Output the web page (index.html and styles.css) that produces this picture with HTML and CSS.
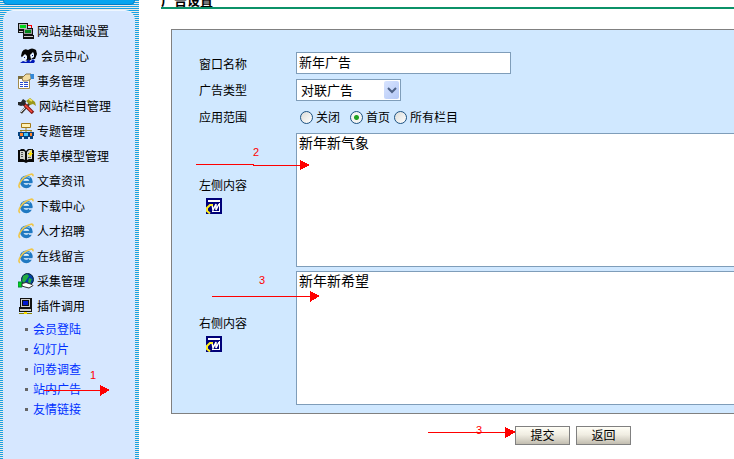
FILE: index.html
```html
<!DOCTYPE html>
<html lang="zh-CN">
<head>
<meta charset="utf-8">
<title>广告设置</title>
<link rel="stylesheet" href="styles.css">
</head>
<body>
<svg class="defs" aria-hidden="true">
  <symbol id="ie" viewBox="0 0 16 16">
    <circle cx="8.300" cy="8.800" r="4.700" fill="#e4f4ff" stroke="#2079c2" stroke-width="3.400"/>
    <path d="M4 7.800h10v2.400H4z" fill="#2079c2"/>
    <path d="M11 10.200h5v1.600h-5z" fill="#d6e7ff"/>
    <path d="M4 5.500q4-3.500 8-.5" fill="none" stroke="#7cc5f0" stroke-width="1.200"/>
    <path d="M2 15C-1.500 12 5 3 13 1.200q2.500-.4 1.800 2" fill="none" stroke="#efc64a" stroke-width="1.600"/>
  </symbol>
  <symbol id="editor" viewBox="0 0 16 16">
    <path d="M0 0h16v16H0z" fill="#000078"/>
    <path d="M2 2h12v2H2zM13 5h1v9H6v-1h7z" fill="#fff"/>
    <path d="M6 6l1 6 3-6v6l3-6" fill="none" stroke="#fff" stroke-width="1.500"/>
    <path d="M7 7H4L1 10v3l3 2.500" fill="none" stroke="#ffef20" stroke-width="2"/>
  </symbol>
</svg>

<div class="page">
  <aside class="sidebar">
    <div class="tab"></div>
    <nav class="menu">
      <ul class="modules">
        <li><a href="#"><svg viewBox="0 0 16 16" shape-rendering="crispEdges"><path d="M0 0h10v7H0zM0 7h6v3H0zM5 5h10v7H5zM5 12h11v4H5z" fill="#111"/><path d="M1 1h8v5H1z" fill="#bbb"/><path d="M2 2h6v3H2z" fill="#00d51c"/><path d="M6 6h8v5H6z" fill="#999"/><path d="M7 7h6v3H7z" fill="#008a18"/><path d="M1 8h4v1H1zM6 13h9v1H6z" fill="#ccc"/><path d="M10 2h3v3" fill="none" stroke="red"/></svg>网站基础设置</a></li>
        <li><a href="#"><svg class="wide" viewBox="0 0 18 16"><path d="M3 4Q5 0 9 2q4-3 8 0l1 4-2 5h-3l-3 2-5-1-3-4z" fill="#050505"/><path d="M3 9l3-3 2 2v3l-2 2-3-1zM11 7l3-3 1 2v3l-3 2z" fill="#e5f1ff"/><path d="M1 15l3-2 3 1 3-3 1 3 3-3 2 2-1 2z" fill="#0018b8"/><path d="M5 9h1v1H5zM13 7h1v1h-1z" fill="#001880"/></svg>会员中心</a></li>
        <li><a href="#"><svg viewBox="0 0 16 16"><path d="M.5 3.500h11v12H.5z" fill="#fff" stroke="#a28c4d"/><path d="M0 3h5v3H0z" fill="#7b6c3b"/><path d="M4 5l4-4h5v5l-4 2H5z" fill="#f1dba1" stroke="#8a7850"/><path d="M12 1h4v5h-3z" fill="#3488d8"/><path d="M2 9.500h3m1 0h4M2 11.500h3m1 0h4M2 13.500h3m1 0h4" stroke="#244bd0"/></svg>事务管理</a></li>
        <li><a href="#"><svg class="tools" viewBox="0 0 18 16"><path d="M3 15L12 5" stroke="#403c36" stroke-width="2.500"/><path d="M3 14L10 7" stroke="#ddd" stroke-width="1"/><path d="M6 6l9 9" stroke="#801818" stroke-width="3.500"/><path d="M7 7l7 7" stroke="#ff4f3d" stroke-width="1.500"/><path d="M0 4h3l2-3 3 2-1 4-4 1-3-1z" fill="#26282b"/><path d="M8 3l4-3 5 4 1 4-3-2-3 1z" fill="#9b991b"/><path d="M11 1l3 2" stroke="#eee25c" stroke-width="2"/></svg>网站栏目管理</a></li>
        <li><a href="#"><svg viewBox="0 0 16 16"><path d="M3.500.5h9v4h-9z" fill="#fff1b5" stroke="#a57b18"/><path d="M8 5v2M2 7.500h12M3 8v2M8 8v2M13 8v2" stroke="#9d8424" fill="none"/><path d="M0 9h16v4h-1v3h-3v-2h-2v2H6v-2H4v2H1v-3H0z" fill="#06427e"/><path d="M2 10h3v3H2zM12 10h2v3h-2z" fill="#ff852c"/><path d="M6 10h4v3H6z" fill="#49c7ff"/></svg>专题管理</a></li>
        <li><a href="#"><svg viewBox="0 0 16 16"><path d="M0 2h2l1-1h3l2 2 2-2h5v1h1v12h-6l-2 1-2-1H0z" fill="#080808"/><path d="M2 3h4l1 1v8l-2-1H2zM9 4l2-2h3v9h-3l-2 1z" fill="#d5d5cf"/><path d="M3 4.500h2M3 6.500h2M3 8.500h2M10 5.500h3M10 9.500h3" stroke="#555"/><path d="M14 1l-4 6h2l-1 3 4-5h-2z" fill="#ffe600"/></svg>表单模型管理</a></li>
        <li><a href="#"><svg><use href="#ie"/></svg>文章资讯</a></li>
        <li><a href="#"><svg><use href="#ie"/></svg>下载中心</a></li>
        <li><a href="#"><svg><use href="#ie"/></svg>人才招聘</a></li>
        <li><a href="#"><svg><use href="#ie"/></svg>在线留言</a></li>
        <li><a href="#"><svg viewBox="0 0 16 16"><circle cx="9.500" cy="6.500" r="6" fill="#003da5" stroke="#062335"/><path d="M5 3l4-2 2 2-2 3-3 4-2-2zM11 5l3 1-2 5-2-2z" fill="#22ad40"/><path d="M0 9h4v5H0z" fill="#00d51c" stroke="#083"/><path d="M4 10.500l4-1 6 2 1 1-4 2.500-4-1-3-1z" fill="#fff" stroke="#333"/></svg>采集管理</a></li>
        <li><a href="#"><svg viewBox="0 0 16 16" shape-rendering="crispEdges"><path d="M2 0h12v10H2zM1 9h13v5H1z" fill="#111"/><path d="M3 1h9v8H3zM2 11h11v2H2z" fill="#ccc"/><path d="M4 2h7v6H4z" fill="#111"/><path d="M5 3h5v4H5z" fill="#0018d0"/><path d="M1 15h13v1H1z" fill="#8c8500"/><path d="M6 14h3v2H6z" fill="#ffdf00"/></svg>插件调用</a></li>
      </ul>
      <ul class="plugins">
        <li><a href="#">会员登陆</a></li>
        <li><a href="#">幻灯片</a></li>
        <li><a href="#">问卷调查</a></li>
        <li><a href="#">站内广告</a></li>
        <li><a href="#">友情链接</a></li>
      </ul>
    </nav>
  </aside>

  <main class="content">
    <h1 class="title">广告设置</h1>
    <form>
      <div class="fields">
        <label for="name">窗口名称</label>
        <input class="text" id="name" type="text" value="新年广告">
        <label for="type">广告类型</label>
        <div class="picker">
          <select id="type"><option>对联广告</option></select>
          <svg class="drop" viewBox="0 0 15 18" aria-hidden="true"><path d="M4 7l4 4 4-4" fill="none" stroke="#4d6185" stroke-width="2"/></svg>
        </div>
        <span id="scope">应用范围</span>
        <div class="radios" role="radiogroup" aria-labelledby="scope">
          <label class="off"><input type="radio" name="scope">关闭</label>
          <label><input type="radio" name="scope" checked>首页</label>
          <label><input type="radio" name="scope">所有栏目</label>
        </div>
        <div class="side">
          <label for="left">左侧内容</label>
          <svg><use href="#editor"/></svg>
        </div>
        <textarea id="left">新年新气象</textarea>
        <div class="side">
          <label for="right">右侧内容</label>
          <svg><use href="#editor"/></svg>
        </div>
        <textarea id="right">新年新希望</textarea>
      </div>
      <div class="actions">
        <button type="submit">提交</button>
        <button type="button">返回</button>
      </div>
    </form>
  </main>

  <svg class="notes" width="734" height="459">
    <g class="arrows" shape-rendering="crispEdges">
      <path d="M44 390h57M196 164h57v1h48M212 296h99M428 432h78"/>
      <path class="heads" d="M100 385l10 5-10 6zM300 160l10 5-10 5zM310 291l10 5-10 6zM505 427l11 5-11 6z"/>
    </g>
    <text x="90" y="379">1</text>
    <text x="253" y="156">2</text>
    <text x="259" y="284">3</text>
    <text x="476" y="434">3</text>
  </svg>
</div>
</body>
</html>
```
FILE: styles.css
```css
* { box-sizing: border-box; }

body {
  margin: 0;
  background: #fff;
  color: #000;
  font: 12px/16px "Noto Sans CJK SC", sans-serif;
}

.defs { position: absolute; width: 0; height: 0; }

.page {
  position: relative;
  display: flex;
  height: 100vh;
  overflow: hidden;
}

.sidebar {
  display: flex;
  flex-direction: column;
  flex: 0 0 139px;
  padding: 0 4px 0 3px;
  background: repeating-linear-gradient(#18a2e4 0 1px, #eeeae6 1px 2px);
}

.tab {
  height: 5px;
  margin-bottom: 5px;
  background: #08a5ef;
  border: solid #087cc4;
  border-width: 0 1px 1px;
  border-radius: 0 0 6px 6px;
}

.menu {
  flex: 1;
  padding: 7px 0 0 15px;
  background: #d6e7ff;
  border-top: 1px solid #eef6ff;
  border-radius: 10px 10px 0 0;
}

ul { margin: 0; padding: 0; list-style: none; }
a { display: flex; align-items: center; text-decoration: none; color: inherit; }
.modules a { height: 25px; gap: 3px; }
.modules svg { width: 16px; height: 16px; }
.modules svg.wide { width: 20px; }
.modules svg.tools { width: 18px; }

.plugins { margin-top: 1px; color: #0030ff; }
.plugins a { height: 20px; padding-left: 7px; gap: 5px; }
.plugins a::before { content: ""; width: 3px; height: 3px; background: #666; }

.content { flex: 1; min-width: 0; padding-left: 22px; }

.title {
  display: flex;
  align-items: flex-end;
  height: 9px;
  margin: 0 0 20px;
  overflow: hidden;
  border-bottom: 2px solid #0b9268;
  font-size: 13px;
  line-height: 14px;
}

.fields {
  display: grid;
  grid-template-columns: 97px 1fr;
  grid-template-rows: 23px 22px 24px;
  gap: 4px 0;
  align-items: center;
  margin-left: 10px;
  padding: 22px 0 8px 27px;
  background: #d0e8ff;
  border: 1px solid #808080;
  border-right: 0;
}

.text, select, textarea {
  margin: 0;
  border: 1px solid #7f9db9;
  border-radius: 0;
  background: #fff;
  color: #000;
  font: 13px/16px "Noto Sans CJK SC", sans-serif;
  outline: 0;
}

.text { width: 215px; height: 22px; padding: 0 2px 4px; align-self: start; }

.picker { position: relative; width: 105px; }
select { display: block; width: 100%; height: 22px; padding: 0 4px; appearance: none; }
.drop {
  position: absolute;
  top: 2px;
  right: 2px;
  width: 15px;
  height: 18px;
  border-radius: 2px;
  background: linear-gradient(135deg, #d8e4ff, #b4c8f6);
  pointer-events: none;
}

.radios { display: flex; gap: 4px; padding-left: 4px; }
.radios label { display: flex; align-items: center; gap: 3px; }
.radios .off { margin-right: 6px; }
.radios input {
  width: 13px;
  height: 13px;
  margin: 0;
  appearance: none;
  border: 1px solid #1d5281;
  border-radius: 50%;
  background: linear-gradient(135deg, #dcdcd8, #fff);
}
.radios input:checked {
  background: radial-gradient(circle, #21a121 0 2px, #f4f4f2 3px);
}

textarea {
  display: block;
  width: 100%;
  height: 134px;
  padding: 0 2px;
  border-right: 0;
  resize: none;
  font-size: 14px;
}

.side { padding-bottom: 10px; }
.side label { display: block; }
.side svg { display: block; width: 16px; height: 16px; margin: 5px 0 0 7px; }

.actions { display: flex; gap: 6px; padding: 12px 0 0 354px; }
button {
  width: 55px;
  height: 19px;
  padding: 0 0 2px;
  border: 1px solid #808080;
  background: linear-gradient(#fffef6, #f0ede2 45%, #c2bdb0);
  color: #000;
  font: 12px/16px "Noto Sans CJK SC", sans-serif;
}

.notes { position: absolute; top: 0; left: 0; pointer-events: none; }
.notes text { fill: #f00; font: 11px "Liberation Sans", sans-serif; }
.arrows { fill: none; stroke: #f00; }
.arrows .heads { fill: #f00; stroke: none; }
```
